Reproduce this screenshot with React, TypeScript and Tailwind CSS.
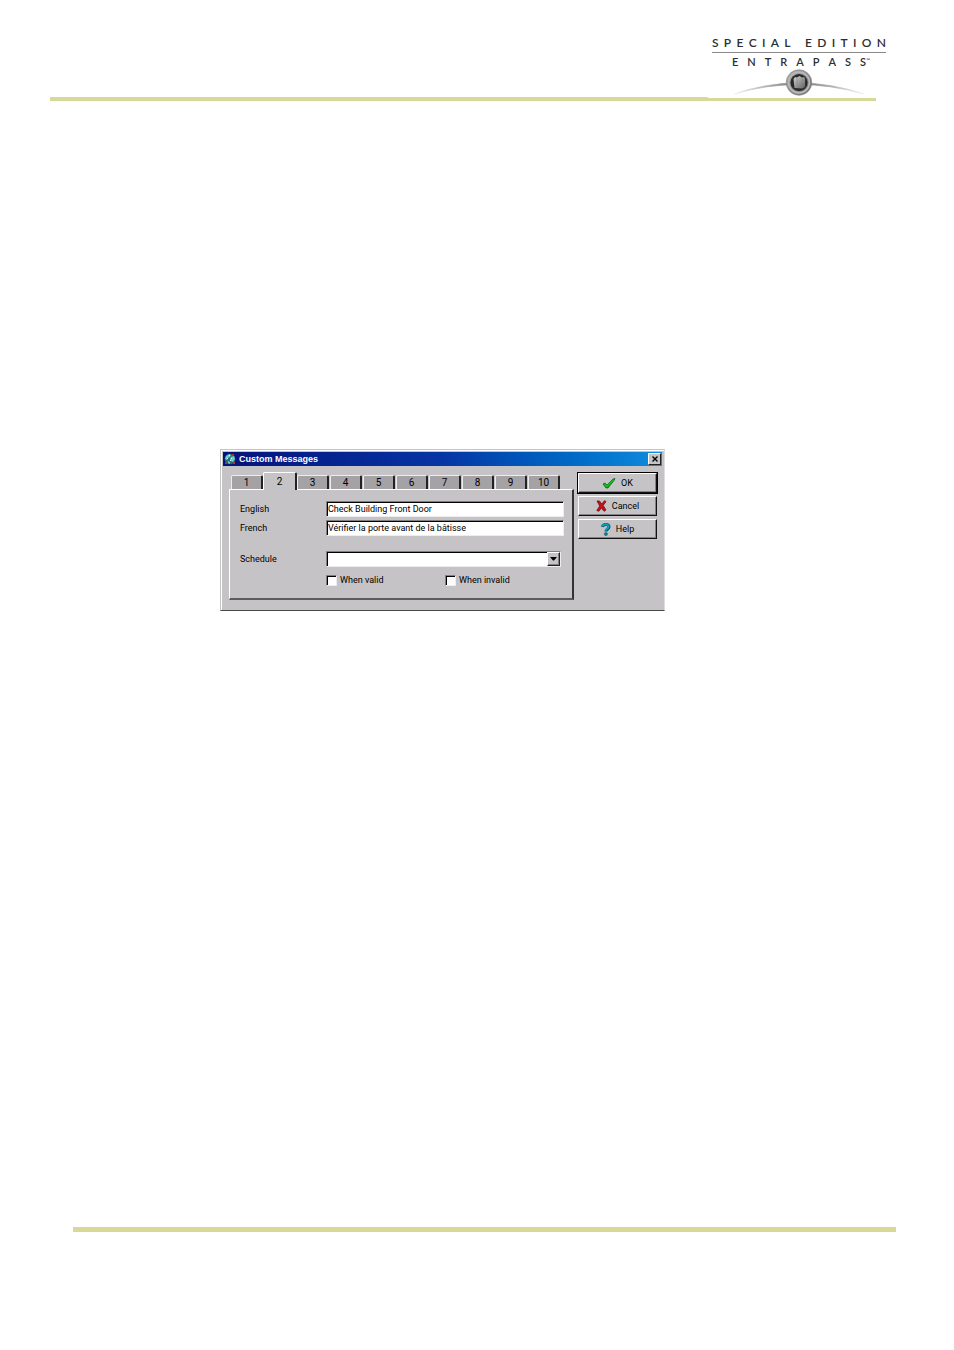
import { useState } from "react";

const TABS = ["1", "2", "3", "4", "5", "6", "7", "8", "9", "10"];

function SpacedText({ text }: { text: string }) {
  return (
    <>
      {text.split("").map((letter, i) => (
        <span key={i} className={letter === " " ? "w-1" : ""}>
          {letter}
        </span>
      ))}
    </>
  );
}

function Logo() {
  return (
    <div className="flex w-[174px] flex-col items-center font-['Lato','Open_Sans',sans-serif] text-[#2e2e2e]">
      <div className="flex w-full justify-between border-b border-[#8a8a8a] pb-0.5 text-xs leading-[14px] font-semibold">
        <SpacedText text="SPECIAL EDITION" />
      </div>
      <div className="mt-0.5 ml-1 flex w-[138px] text-[11px] leading-[14px] font-semibold">
        <div className="flex flex-1 justify-between">
          <SpacedText text="ENTRAPASS" />
        </div>
        <span className="text-[5px] leading-[10px]">™</span>
      </div>
      <svg width="134" height="29" viewBox="0 1 134 29" aria-hidden="true">
        <defs>
          <linearGradient id="arc" x1="0" x2="1">
            <stop offset="0" stopColor="#f2f2f2" />
            <stop offset="0.4" stopColor="#8a8a8a" />
            <stop offset="0.6" stopColor="#8a8a8a" />
            <stop offset="1" stopColor="#f2f2f2" />
          </linearGradient>
          <linearGradient id="ring" x1="0" y1="0" x2="1" y2="1">
            <stop offset="0" stopColor="#b0b0b0" />
            <stop offset="0.5" stopColor="#8c8c8c" />
            <stop offset="1" stopColor="#6c6c6c" />
          </linearGradient>
          <linearGradient id="door" x1="0" y1="0" x2="1" y2="1">
            <stop offset="0" stopColor="#d4d4d4" />
            <stop offset="1" stopColor="#606060" />
          </linearGradient>
        </defs>
        <path d="M2 26Q66 4 132 26Q66 7 2 26Z" fill="url(#arc)" stroke="url(#arc)" strokeWidth="0.8" />
        <circle cx="67" cy="14.5" r="12.8" fill="url(#ring)" stroke="#8a8a8a" strokeWidth="0.6" />
        <circle cx="67" cy="14.5" r="10.4" fill="none" stroke="#b9b9b9" strokeWidth="1.6" />
        <circle cx="67" cy="14.5" r="8.6" fill="#2a2a2a" />
        <path d="M61.5 11l1.6-2 1.8.6L67.4 8l2.6 1.4 2.2-.4.9 2v8l-2.8 1.4-7.8-.4z" fill="url(#door)" />
        <path d="M65 10v10M69.8 10v10" stroke="#8a8a8a" strokeWidth="0.6" />
      </svg>
    </div>
  );
}

function GlobeIcon() {
  return (
    <svg width="12" height="12" viewBox="0 0 12 12" aria-hidden="true">
      <circle cx="6" cy="6" r="5.3" fill="#2d6b72" />
      <path d="M2 3l3-2 2 1-1 2-2 1-1 2-2-1zM7 4l3-1 1 3-2 3-2-1-1-2zM4 8l2 1v2l-2-1z" fill="#66cfc8" />
      <path d="M5 2h1v1H5zM7 5h1v1H7zM3 5h1v1H3zM6 7h1v1H6z" fill="#e9ffff" />
      <path d="M1 9l2 1v1H1zM9 9h2v2H9zM8 1h2v1H8zM1 3h1v1H1z" fill="#c42b30" />
    </svg>
  );
}

function CheckIcon() {
  return (
    <svg width="14" height="12" viewBox="0 0 14 12" aria-hidden="true">
      <path d="M1 7l2-1 2 2 6-6 2-.5-1 2L6 11H4z" fill="#00ae10" stroke="#075b12" strokeWidth="0.7" />
      <path d="M2.5 7l2.3 2.3 6.6-6.6" fill="none" stroke="#12c622" strokeWidth="1.2" />
    </svg>
  );
}

function CrossIcon() {
  return (
    <svg width="11" height="12" viewBox="0 0 11 12" aria-hidden="true">
      <path d="M1 1h2.5l2.2 3L8.5.7l1.5.8-2.8 4L10 10l-2 1.3L5.4 8 3 11.2.8 10.5 3.7 6z" fill="#c3121a" stroke="#760b10" strokeWidth="0.8" />
    </svg>
  );
}

function HelpIcon() {
  return (
    <svg width="10" height="13" viewBox="0 0 10 13" aria-hidden="true">
      <path d="M1.5 4C2 .8 8 .8 8 4c0 2-3 2-3 4.4" fill="none" stroke="#07566c" strokeWidth="3" />
      <path d="M1.5 3.5C2 .6 7.6.8 7.6 3.8c0 2-3 2-3 4" fill="none" stroke="#08a5bd" strokeWidth="1.8" />
      <circle cx="4.9" cy="11" r="1.6" fill="#078298" stroke="#07566c" strokeWidth="0.5" />
    </svg>
  );
}

const fieldClass =
  "h-4 min-w-0 rounded-none border border-t-[#808080] border-r-[#eeecee] border-b-[#eeecee] border-l-[#808080] bg-white px-px text-black shadow-[inset_1px_1px_0_#000] outline-none";
const buttonClass =
  "flex h-5 items-center justify-center gap-[5px] border border-t-white border-r-[#111] border-b-[#111] border-l-white shadow-[inset_-1px_-1px_0_#858285]";
const checkboxClass =
  "size-[11px] appearance-none border border-t-[#808080] border-r-[#eeecee] border-b-[#eeecee] border-l-[#808080] bg-white shadow-[inset_1px_1px_0_#000] checked:bg-[#404040]";

function MessageFields() {
  const [english, setEnglish] = useState("Check Building Front Door");
  const [french, setFrench] = useState("Vérifier la porte avant de la bâtisse");

  return (
    <div className="flex h-[111px] flex-col border-t border-r-2 border-b-2 border-l border-t-white border-r-[#333] border-b-[#5c5a5c] border-l-white pt-[11px] pr-2 pl-2.5">
      <div className="flex items-center">
        <label htmlFor="english" className="w-[86px]">English</label>
        <input id="english" value={english} onChange={(e) => setEnglish(e.target.value)} className={`${fieldClass} flex-1`} />
      </div>
      <div className="mt-[3px] flex items-center">
        <label htmlFor="french" className="w-[86px]">French</label>
        <input id="french" value={french} onChange={(e) => setFrench(e.target.value)} className={`${fieldClass} flex-1`} />
      </div>
      <div className="mt-[15px] flex items-center pr-[3px]">
        <label htmlFor="schedule" className="w-[86px]">Schedule</label>
        <div className="relative flex flex-1">
          <select id="schedule" className={`${fieldClass} w-full appearance-none`}>
            <option value=""></option>
          </select>
          <span className="pointer-events-none absolute top-px right-px flex h-3.5 w-[13px] items-center justify-center border border-t-white border-r-[#222] border-b-[#222] border-l-white bg-[#c6c3c6] shadow-[inset_-1px_-1px_0_#808080]">
            <svg width="7" height="4" viewBox="0 0 7 4" aria-hidden="true">
              <path d="M0 0h7L4 3.5H3z" fill="#000" />
            </svg>
          </span>
        </div>
      </div>
      <div className="mt-2 grid grid-cols-2 pl-[86px] leading-[11px]">
        <label className="flex items-center gap-[3px]">
          <input type="checkbox" className={checkboxClass} />
          When valid
        </label>
        <label className="flex items-center gap-[3px]">
          <input type="checkbox" className={checkboxClass} />
          When invalid
        </label>
      </div>
    </div>
  );
}

function CustomMessagesDialog() {
  const [active, setActive] = useState("2");

  return (
    <section
      aria-label="Custom Messages"
      className="w-full max-w-[445px] border border-t-[#c6c3c6] border-r-[#dddbdd] border-b-[#4a484a] border-l-[#c6c3c6] bg-[#c6c3c6] pb-2.5 font-['Roboto','Liberation_Sans',sans-serif] text-[9px] leading-3 text-black shadow-[inset_1px_1px_0_#fff]"
    >
      <div className="mx-0.5 mt-0.5 flex h-[14px] items-center gap-[3px] bg-linear-to-r from-[#05127b] via-[#0734a5] to-[#118cdd] px-px">
        <GlobeIcon />
        <h1 className="flex-1 font-['Liberation_Sans',sans-serif] text-[9px] font-bold text-white">Custom Messages</h1>
        <button aria-label="Close" className="flex h-3 w-[13px] items-center justify-center border border-t-white border-r-[#222] border-b-[#222] border-l-white bg-[#c6c3c6]">
          <svg width="6" height="6" viewBox="0 0 6 6" aria-hidden="true">
            <path d="M.5.5l5 5m0-5l-5 5" stroke="#000" strokeWidth="1.4" />
          </svg>
        </button>
      </div>
      <div className="mt-[7px] flex items-start gap-1 pr-[7px] pl-2">
        <div className="min-w-0 flex-1">
          <div role="tablist" className="flex h-4 items-end gap-px pl-0.5 text-[10px]">
            {TABS.map((tab) => (
              <button
                key={tab}
                role="tab"
                aria-selected={tab === active}
                onClick={() => setActive(tab)}
                className={
                  tab === active
                    ? "relative -mx-px -mb-px flex h-[18px] w-[34px] items-center justify-center rounded-t-[2px] border-t border-r-2 border-l border-t-white border-r-[#222] border-l-white bg-[#c6c3c6]"
                    : "flex h-3.5 w-8 items-center justify-center rounded-t-[2px] border-t border-r-2 border-l border-t-[#eeecee] border-r-[#222] border-l-[#eeecee] bg-[#a5a2a5]"
                }
              >
                {tab}
              </button>
            ))}
          </div>
          <MessageFields />
        </div>
        <div className="flex w-[79px] flex-col gap-[3px]">
          <button className={`${buttonClass} outline outline-black`}>
            <CheckIcon />
            OK
          </button>
          <button className={buttonClass}>
            <CrossIcon />
            Cancel
          </button>
          <button className={buttonClass}>
            <HelpIcon />
            Help
          </button>
        </div>
      </div>
    </section>
  );
}

export default function App() {
  return (
    <div className="flex min-h-screen flex-col bg-white">
      <header className="flex items-end pt-9 pr-[68px] pl-[50px]">
        <div className="h-1 flex-1 bg-[#d8d898]" />
        <div className="flex flex-col items-end">
          <Logo />
          <div className="mr-2.5 h-[3px] w-[168px] bg-[#d8d898]" />
        </div>
      </header>
      <main className="flex-1 pt-[348px] pr-5 pl-[220px]">
        <CustomMessagesDialog />
      </main>
      <footer className="pr-[58px] pb-[118px] pl-[73px]">
        <div className="h-[5px] bg-[#d8d898]" />
      </footer>
    </div>
  );
}
